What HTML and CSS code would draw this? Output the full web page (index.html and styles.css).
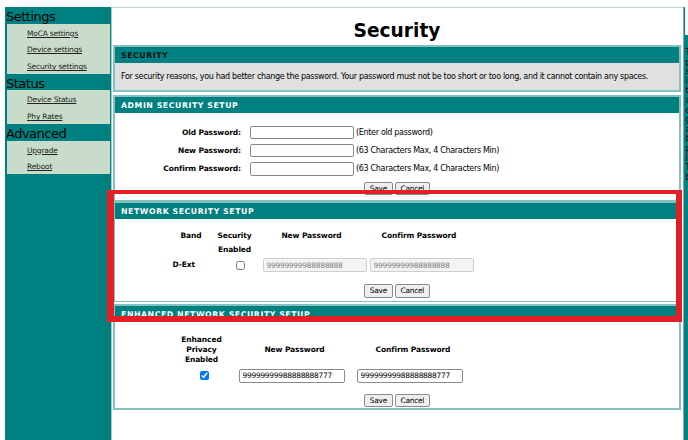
FILE: index.html
```html
<!DOCTYPE html>
<html>
<head>
<meta charset="utf-8">
<title>Security</title>
<link rel="stylesheet" href="styles.css">
</head>
<body>
<div class="frames">
  <nav class="side">
    <div class="grp">Settings</div>
    <div class="items">
      <a href="#">MoCA settings</a>
      <a href="#">Device settings</a>
      <a href="#">Security settings</a>
    </div>
    <div class="grp">Status</div>
    <div class="items">
      <a href="#">Device Status</a>
      <a href="#">Phy Rates</a>
    </div>
    <div class="grp">Advanced</div>
    <div class="items">
      <a href="#">Upgrade</a>
      <a href="#">Reboot</a>
    </div>
  </nav>

  <main class="main">
    <h1 class="title">Security</h1>

    <section class="sec">
      <div class="hd dark">SECURITY</div>
      <div class="note">For security reasons, you had better change the password. Your password must not be too short or too long, and it cannot contain any spaces.</div>
    </section>

    <section class="sec admin">
      <div class="hd">ADMIN SECURITY SETUP</div>
      <div class="admin-body">
        <div class="frow"><span class="lbl">Old Password:</span><input class="inp" type="password"><span class="hint">(Enter old password)</span></div>
        <div class="frow"><span class="lbl">New Password:</span><input class="inp" type="password"><span class="hint">(63 Characters Max, 4 Characters Min)</span></div>
        <div class="frow"><span class="lbl">Confirm Password:</span><input class="inp" type="password"><span class="hint">(63 Characters Max, 4 Characters Min)</span></div>
        <div class="btns admin-btns"><button class="btn">Save</button><button class="btn">Cancel</button></div>
      </div>
    </section>

    <section class="sec net">
      <div class="hd">NETWORK SECURITY SETUP</div>
      <div class="net-body">
        <div class="ngrid">
          <div class="th th-band">Band</div>
          <div class="th th-sec">Security<br>Enabled</div>
          <div class="th th-new">New Password</div>
          <div class="th th-conf">Confirm Password</div>
          <div class="band">D-Ext</div>
          <input class="chk" type="checkbox">
          <input class="inp dis" type="text" value="99999999988888888" disabled>
          <input class="inp dis" type="text" value="99999999988888888" disabled>
        </div>
        <div class="btns net-btns"><button class="btn">Save</button><button class="btn">Cancel</button></div>
      </div>
    </section>

    <section class="sec enh">
      <div class="hd">ENHANCED NETWORK SECURITY SETUP</div>
      <div class="enh-body">
        <div class="egrid">
          <div class="eth">Enhanced<br>Privacy<br>Enabled</div>
          <div class="eth eth-new">New Password</div>
          <div class="eth eth-conf">Confirm Password</div>
          <input class="chk" type="checkbox" checked>
          <input class="inp" type="text" value="99999999988888888777">
          <input class="inp" type="text" value="99999999988888888777">
        </div>
        <div class="btns enh-btns"><button class="btn">Save</button><button class="btn">Cancel</button></div>
      </div>
    </section>
  </main>

  <aside class="help">
    <div class="hbox"></div>
    <div class="htext">The<br>password<br>should<br>include<br>the<br>alphanumeric<br>characters<br>given<br>and<br>both<br>punctuation<br>letters<br>The<br>but</div>
  </aside>
</div>
<div class="hl"></div>
</body>
</html>
```

FILE: styles.css
```css
* { box-sizing: border-box; }

body {
  margin: 0;
  width: 688px;
  height: 440px;
  overflow: hidden;
  position: relative;
  background: #fff;
  font-family: "DejaVu Sans", sans-serif;
  color: #000;
}

.frames {
  display: flex;
  height: 440px;
  padding: 7px 0 0 5px;
}

/* sidebar */
.side {
  width: 106px;
  flex: none;
  background: #008080;
}
.grp {
  height: 16.7px;
  line-height: 20px;
  font-size: 13px;
  letter-spacing: -0.5px;
  padding-left: 1px;
  color: #000;
}
.items {
  margin: 0 1px 0 2px;
  background: #c9dcc9;
}
.items a {
  display: block;
  height: 16.7px;
  line-height: 19.5px;
  padding-left: 20px;
  font-size: 7.5px;
  letter-spacing: -0.2px;
  color: #222;
  text-decoration: underline;
}

/* main */
.main {
  width: 572px;
  flex: none;
  border-left: 1px solid #9ccccc;
  border-top: 1px solid #b8d4d4;
  padding: 0 2px 0 1px;
  background: #fff;
}
.title {
  margin: 0;
  height: 37px;
  padding-top: 8px;
  line-height: 29px;
  font-size: 18.6px;
  font-weight: bold;
  text-align: center;
}

.sec {
  border: 2px solid #84c2c2;
  margin-bottom: 3px;
}
.hd {
  height: 16px;
  padding: 2px 0 0 6px;
  line-height: 14px;
  background: #008080;
  color: #fff;
  font-weight: bold;
  font-size: 7.8px;
  letter-spacing: 0.55px;
  white-space: nowrap;
  overflow: hidden;
}
.hd.dark { color: #111; }

.note {
  height: 27px;
  line-height: 27px;
  background: #e0e0e0;
  padding-left: 6px;
  font-size: 8px;
  letter-spacing: -0.32px;
  white-space: nowrap;
}

/* admin */
.sec.admin {
  border-bottom-width: 1px;
  margin-bottom: 0;
}
.admin-body {
  height: 87px;
  padding-top: 12.5px;
}
.frow {
  display: flex;
  align-items: center;
  height: 13.5px;
  margin-bottom: 4.85px;
}
.lbl {
  width: 126px;
  text-align: right;
  font-weight: bold;
  font-size: 7.5px;
  letter-spacing: -0.1px;
}
.frow .inp { margin-left: 9px; }
.hint {
  margin-left: 2px;
  font-size: 8px;
  letter-spacing: -0.32px;
  white-space: nowrap;
}

.inp {
  width: 104px;
  height: 14px;
  margin: 0;
  padding: 0 2.5px;
  border: 1px solid #8a8a8a;
  border-radius: 2px;
  background: #fff;
  font-family: "DejaVu Sans", sans-serif;
  font-size: 7.5px;
  letter-spacing: -0.3px;
  color: #000;
  outline: none;
}
.inp.dis {
  background: #f3f3f3;
  border-color: #cfcfcf;
  color: #808080;
}
.frow .inp { height: 13.5px; }

.btns {
  display: flex;
  justify-content: center;
  gap: 1.5px;
}
.btn {
  height: 13.5px;
  margin: 0;
  padding: 0 5px;
  border: 1px solid #8a8a8a;
  border-radius: 2px;
  background: #efefef;
  font-family: "DejaVu Sans", sans-serif;
  font-size: 7.5px;
  letter-spacing: -0.3px;
  line-height: 11px;
  color: #000;
}
.admin-btns { margin-top: 6.5px; }
.admin-btns .btn { height: 13px; }

/* network */
.sec.net {
  border-top-width: 2px;
  border-bottom-width: 1px;
  margin-bottom: 2px;
}
.net-body {
  height: 82px;
  padding-top: 10px;
}
.ngrid {
  display: grid;
  grid-template-columns: 42px 51px 107px 104px;
  grid-template-rows: 28px 14px;
  row-gap: 1px;
  margin-left: 55px;
}
.th {
  font-weight: bold;
  font-size: 7.5px;
  letter-spacing: -0.1px;
  line-height: 14px;
  text-align: center;
}
.th-sec { padding-right: 6px; }
.th-new { padding-right: 10px; }
.th-conf { padding-right: 6px; }
.band {
  font-weight: bold;
  font-size: 7.5px;
  letter-spacing: -0.1px;
  line-height: 14px;
  text-align: right;
  padding-right: 17px;
}
.chk {
  width: 9px;
  height: 9px;
  margin: 0 0 0 24px;
  align-self: center;
}
.net-btns { margin-top: 12px; }

/* enhanced */
.enh-body {
  height: 86px;
  padding-top: 13px;
}
.egrid {
  display: grid;
  grid-template-columns: 51px 106px 106px;
  grid-template-rows: 30px 14px;
  column-gap: 12px;
  row-gap: 3.7px;
  margin-left: 61px;
}
.eth {
  font-weight: bold;
  font-size: 7.5px;
  letter-spacing: -0.1px;
  line-height: 10px;
  text-align: center;
  align-self: center;
}
.eth-new { padding-left: 5px; }
.eth-conf { padding-left: 6px; }
.egrid .inp { width: 106px; }
.enh-btns { margin-top: 11.3px; }

/* help frame */
.help {
  width: 5px;
  flex: none;
  border-left: 1px solid #8aa;
  background: #008080;
  padding-left: 1px;
  overflow: hidden;
}
.hbox {
  height: 28px;
  background: #fff;
}
.htext {
  margin-top: 13px;
  font-size: 8px;
  line-height: 9.6px;
  white-space: nowrap;
  padding-left: 0.5px;
}

/* annotation */
.hl {
  position: absolute;
  left: 107px;
  top: 190px;
  width: 575px;
  height: 132px;
  border-style: solid;
  border-color: #e31e24;
  border-width: 4px 6px 6px 7px;
  pointer-events: none;
}
```
